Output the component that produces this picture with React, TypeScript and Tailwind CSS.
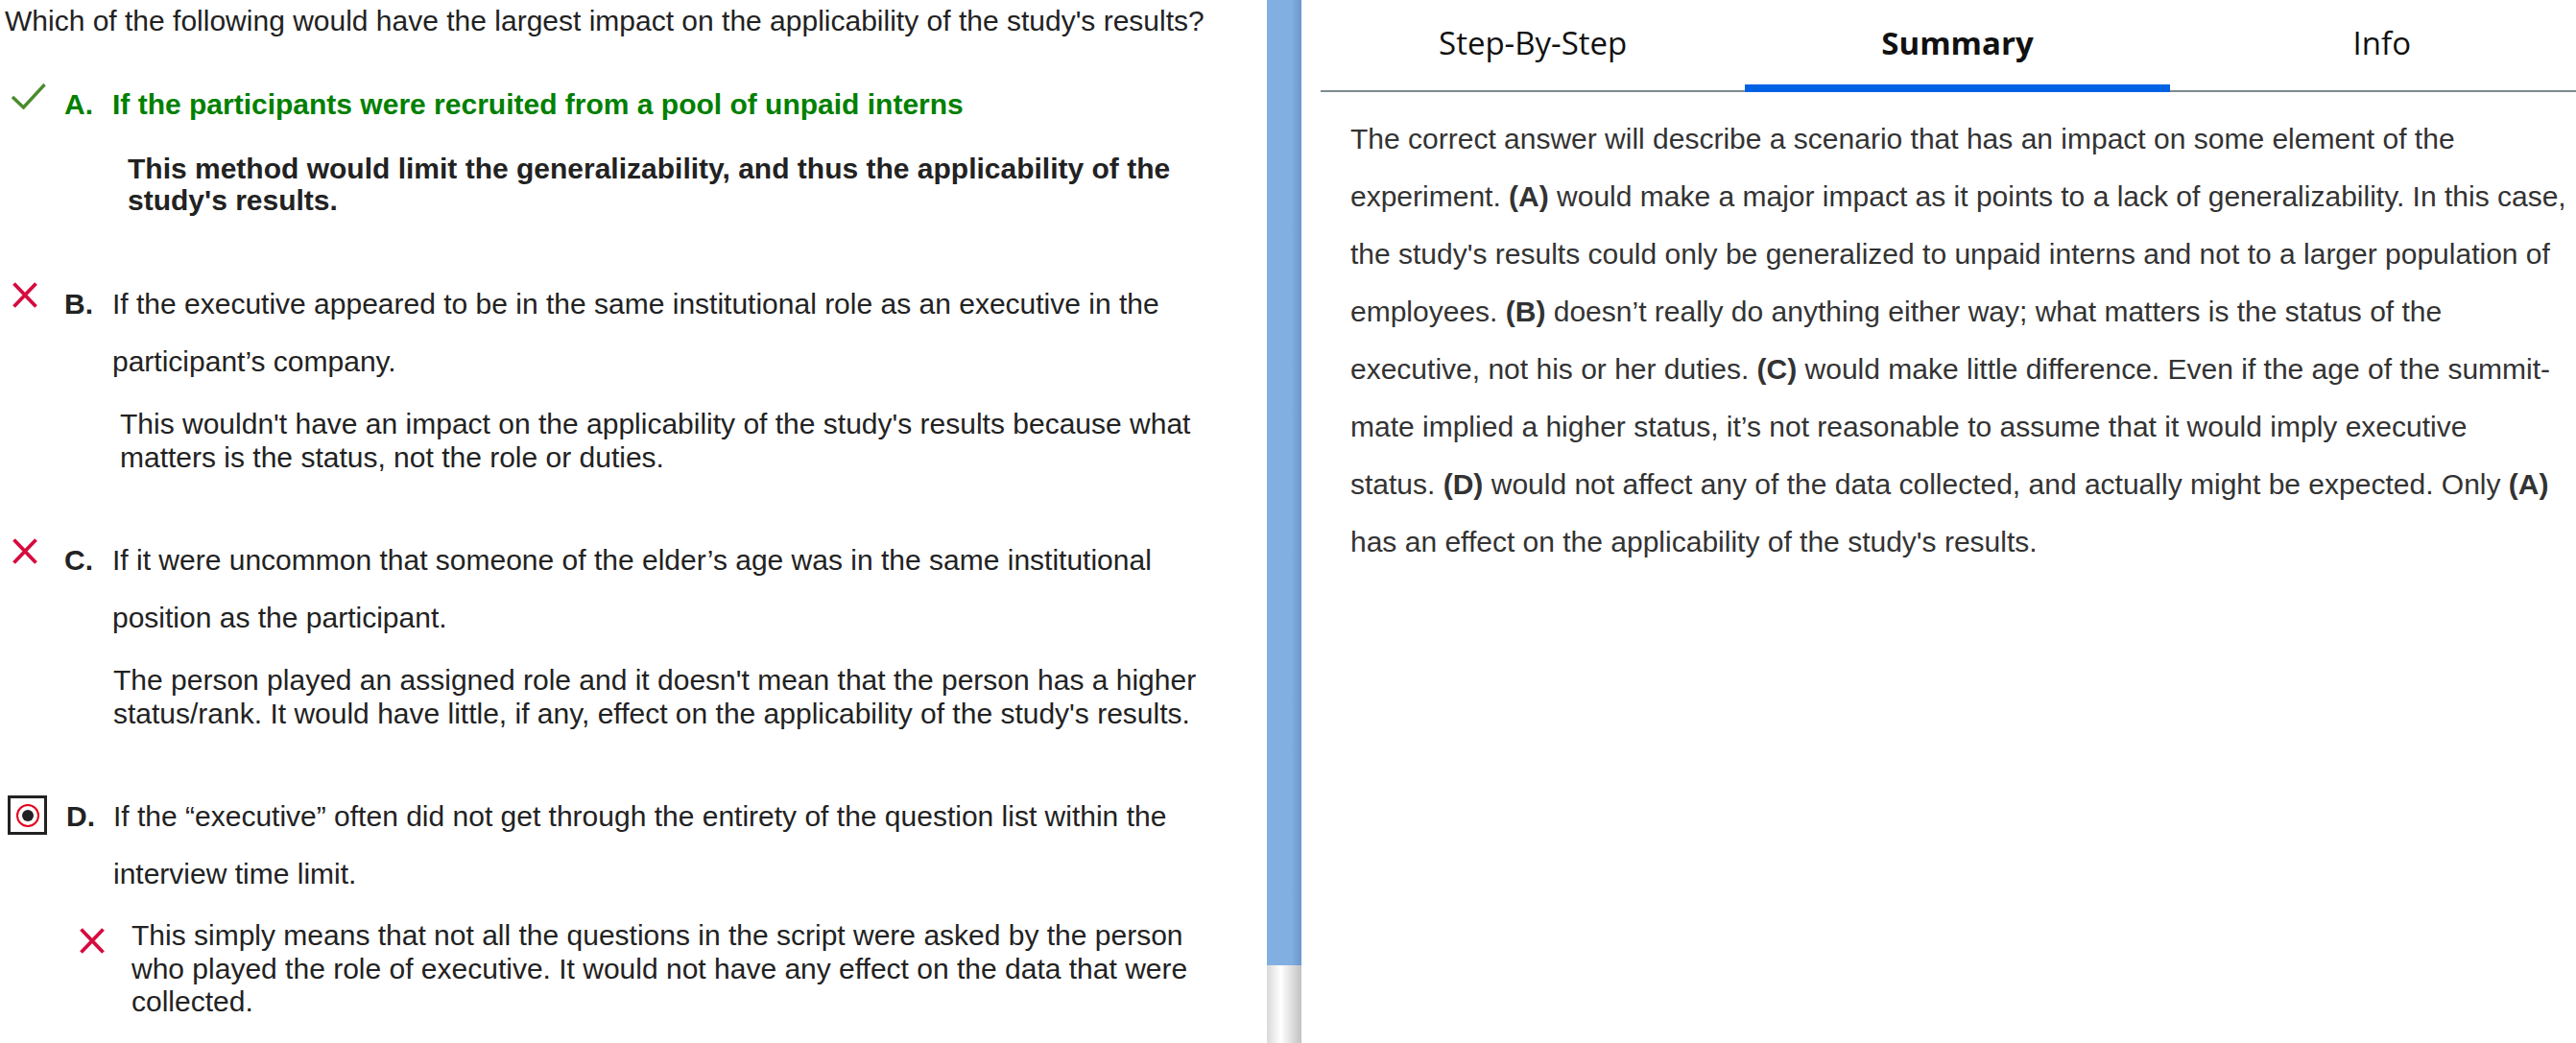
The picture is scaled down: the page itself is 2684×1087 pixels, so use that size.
import type { ReactNode } from 'react'

const sans = { fontFamily: '"Liberation Sans", Arial, sans-serif' }

function Cross({ className = '' }: { className?: string }) {
  return (
    <svg width="26" height="27" viewBox="0 0 26 27" className={className}>
      <path d="M1.5 1.5 L24.5 25.5 M24.5 1.5 L1.5 25.5" stroke="#d50b3e" strokeWidth="3.8" fill="none" />
    </svg>
  )
}

function Check() {
  return (
    <svg width="36" height="27" viewBox="0 0 36 27" className="mt-[8px]">
      <polyline points="1,14 12.5,25 34.5,1" stroke="#4b8b2d" strokeWidth="3.4" fill="none" />
    </svg>
  )
}

function SelectedRadio() {
  return (
    <div className="mt-[8px] flex h-[41px] w-[41px] items-center justify-center border-[3px] border-[#222]">
      <div className="flex h-[24px] w-[24px] items-center justify-center rounded-full border-2 border-[#e4001b]">
        <div className="h-[12px] w-[12px] rounded-full bg-[#222]" />
      </div>
    </div>
  )
}

interface OptionProps {
  letter: string
  icon: ReactNode
  iconCol: string
  letterCol: string
  text: string
  correct?: boolean
  gap: string
  children: ReactNode
}

function Option({ letter, icon, iconCol, letterCol, text, correct, gap, children }: OptionProps) {
  return (
    <div className={gap}>
      <div className={'flex leading-[60px] ' + (correct ? 'font-bold text-[#008000]' : '')}>
        <div className={'shrink-0 ' + iconCol}>{icon}</div>
        <div className={'shrink-0 font-bold ' + letterCol}>{letter}.</div>
        <div className="min-w-0 flex-1">{text}</div>
      </div>
      {children}
    </div>
  )
}

export default function App() {
  return (
    <div className="flex h-[1087px] w-[2684px] overflow-hidden bg-white">
      {/* question + answers */}
      <div className="w-[1320px] shrink-0 pr-[50px] text-[30px] text-[#222]" style={sans}>
        <p className="pl-[5px] pt-[5px] leading-[34px]">
          Which of the following would have the largest impact on the applicability of the study's results?
        </p>

        <Option letter="A" correct gap="mt-[40px]" icon={<Check />} iconCol="w-[67px] pl-[12px]" letterCol="w-[50px]"
          text="If the participants were recruited from a pool of unpaid interns">
          <p className="ml-[133px] mt-[20px] font-bold leading-[33px]">
            This method would limit the generalizability, and thus the applicability of the study's results.
          </p>
        </Option>

        <Option letter="B" gap="mt-[62px]" icon={<Cross className="mt-[7px]" />} iconCol="w-[67px] pl-[13px]" letterCol="w-[50px]"
          text="If the executive appeared to be in the same institutional role as an executive in the participant’s company.">
          <p className="ml-[125px] mt-[18px] leading-[34.5px]">
            This wouldn't have an impact on the applicability of the study's results because what matters is the status, not the role or duties.
          </p>
        </Option>

        <Option letter="C" gap="mt-[60px]" icon={<Cross className="mt-[7px]" />} iconCol="w-[67px] pl-[13px]" letterCol="w-[50px]"
          text="If it were uncommon that someone of the elder’s age was in the same institutional position as the participant.">
          <p className="ml-[118px] mt-[18px] leading-[34.5px]">
            The person played an assigned role and it doesn't mean that the person has a higher status/rank. It would have little, if any, effect on the applicability of the study's results.
          </p>
        </Option>

        <Option letter="D" gap="mt-[60px]" icon={<SelectedRadio />} iconCol="w-[69px] pl-[8px]" letterCol="w-[49px]"
          text="If the “executive” often did not get through the entirety of the question list within the interview time limit.">
          <div className="ml-[83px] mt-[17px] flex gap-[28px]">
            <Cross className="mt-[9px] shrink-0" />
            <p className="min-w-0 flex-1 leading-[34.5px]">
              This simply means that not all the questions in the script were asked by the person who played the role of executive. It would not have any effect on the data that were collected.
            </p>
          </div>
        </Option>
      </div>

      {/* splitter */}
      <div className="flex w-[36px] shrink-0 flex-col">
        <div className="h-[1006px] bg-linear-to-r from-[#82afe2] from-70% to-[#6b97cb]" />
        <div className="flex-1 bg-linear-to-r from-[#d9d9d9] via-white via-40% to-[#c2c2c2]" />
      </div>

      {/* explanation panel */}
      <div className="min-w-0 flex-1 overflow-hidden pl-[20px]">
        <div className="grid w-[1327px] grid-cols-3 border-b-2 border-[#7e8b91] text-[33px] text-[#111]"
          style={{ fontFamily: '"Open Sans", sans-serif' }}>
          <div className="h-[94px] pt-[20px] text-center">Step-By-Step</div>
          <div className="relative h-[94px] pt-[20px] text-center font-bold">
            Summary
            <div className="absolute bottom-[-2px] left-0 right-0 h-[8px] bg-[#0062e3]" />
          </div>
          <div className="h-[94px] pt-[20px] text-center">Info</div>
        </div>
        <p className="ml-[31px] mt-[19px] w-[1269px] text-[30px] leading-[60px] text-[#333]" style={sans}>
          The correct answer will describe a scenario that has an impact on some element of the experiment. <b>(A)</b> would
          make a major impact as it points to a lack of generalizability. In this case, the study's results could only be
          generalized to unpaid interns and not to a larger population of employees. <b>(B)</b> doesn’t really do anything
          either way; what matters is the status of the executive, not his or her duties. <b>(C)</b> would make little
          difference. Even if the age of the summit-mate implied a higher status, it’s not reasonable to assume that it would
          imply executive<br />
          status. <b>(D)</b> would not affect any of the data collected, and actually might be expected.
          Only <b>(A)</b> has an effect on the applicability of the study's results.
        </p>
      </div>
    </div>
  )
}
